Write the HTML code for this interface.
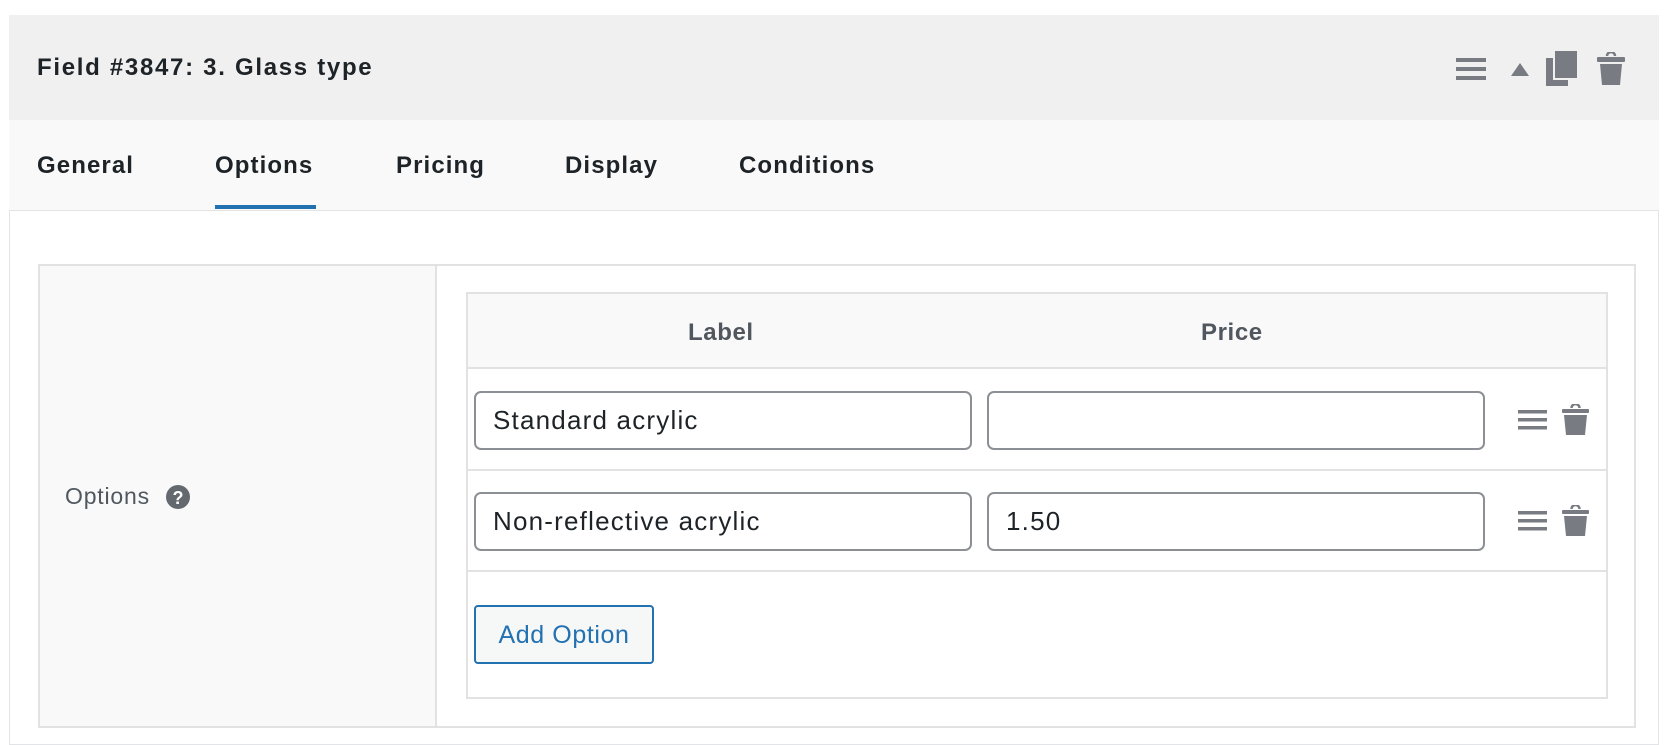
<!DOCTYPE html>
<html><head><meta charset="utf-8"><style>
*{box-sizing:border-box;margin:0;padding:0}
body{width:1674px;height:734px;background:#fff;font-family:"Liberation Sans",sans-serif;position:relative;overflow:hidden;color:#1d2327}
.abs{position:absolute}
.panel{left:9px;top:15px;width:1650px;height:730px;border:1px solid #e2e4e7;background:#fff}
.hdr{left:9px;top:15px;width:1650px;height:105px;background:#f0f0f1}
.tabs{left:9px;top:120px;width:1650px;height:91px;background:#f9f9f9;border-bottom:1px solid #e4e4e4}
.title{left:37px;top:54px;font-size:24px;font-weight:bold;color:#1d2327;letter-spacing:1.7px}
.tab{top:152px;font-size:24px;font-weight:bold;color:#1d2327;letter-spacing:1.1px}
.ul{left:215px;top:205px;width:101px;height:4px;background:#2271b1}
.outer{left:38px;top:264px;width:1598px;height:464px;border:2px solid #e2e2e2;background:#fff}
.leftcol{left:40px;top:266px;width:397px;height:460px;background:#f9f9f9;border-right:2px solid #e2e2e2}
.inner{left:466px;top:292px;width:1142px;height:407px;border:2px solid #e2e2e2;background:#fff}
.ihead{left:468px;top:294px;width:1138px;height:75px;background:#f9f9f9;border-bottom:2px solid #e2e2e2}
.th{top:319px;font-size:24px;font-weight:bold;color:#50575e;letter-spacing:0.6px}
.line{left:468px;width:1138px;height:2px;background:#e2e2e2}
.inp{height:59px;border:2px solid #8c8f94;border-radius:7px;background:#fff;font-size:26px;padding-left:17px;line-height:55px;color:#1d2327;letter-spacing:1.2px}
.btn{left:474px;top:605px;width:180px;height:59px;border:2px solid #2271b1;border-radius:4px;background:#f6f7f7;color:#2271b1;font-size:25px;line-height:57px;text-align:center;letter-spacing:0.6px}
</style></head><body>
<div class="abs panel"></div>
<div class="abs hdr"></div>
<div class="abs title">Field #3847: 3. Glass type</div>
<svg class="abs" style="left:1456px;top:58px" width="30" height="22"><rect y="0" width="30" height="4" fill="#787c82"/><rect y="9" width="30" height="4" fill="#787c82"/><rect y="18" width="30" height="4" fill="#787c82"/></svg>
<svg class="abs" style="left:1511px;top:63px" width="18" height="13"><polygon points="9,0 18,13 0,13" fill="#787c82"/></svg>
<svg class="abs" style="left:1546px;top:50px" width="32" height="36"><rect x="0" y="8" width="22" height="28" fill="#787c82"/><rect x="8" y="0" width="24" height="29" fill="#787c82" stroke="#f0f0f1" stroke-width="2"/></svg>
<svg class="abs" style="left:1597px;top:52px" width="28" height="34"><path d="M10 4 a4 4 0 0 1 8 0" stroke="#787c82" stroke-width="2.5" fill="none"/><rect x="0" y="5" width="28" height="5" rx="1" fill="#787c82"/><path d="M3 12 H25 L23 33 H5 Z" fill="#787c82"/></svg>
<div class="abs tabs"></div>
<div class="abs tab" style="left:37px">General</div>
<div class="abs tab" style="left:215px">Options</div>
<div class="abs tab" style="left:396px">Pricing</div>
<div class="abs tab" style="left:565px">Display</div>
<div class="abs tab" style="left:739px">Conditions</div>
<div class="abs ul"></div>
<div class="abs outer"></div>
<div class="abs leftcol"></div>
<div class="abs" style="left:65px;top:483px;font-size:23px;color:#50575e;letter-spacing:0.8px">Options</div>
<svg class="abs" style="left:166px;top:485px" width="24" height="24"><circle cx="12" cy="12" r="12" fill="#646970"/><text x="12" y="19" text-anchor="middle" font-family="Liberation Sans" font-weight="bold" font-size="18" fill="#fff">?</text></svg>
<div class="abs inner"></div>
<div class="abs ihead"></div>
<div class="abs th" style="left:688px">Label</div>
<div class="abs th" style="left:1201px">Price</div>
<div class="abs line" style="top:469px"></div>
<div class="abs line" style="top:570px"></div>
<div class="abs inp" style="left:474px;top:391px;width:498px">Standard acrylic</div>
<div class="abs inp" style="left:987px;top:391px;width:498px"></div>
<div class="abs inp" style="left:474px;top:492px;width:498px">Non-reflective acrylic</div>
<div class="abs inp" style="left:987px;top:492px;width:498px">1.50</div>
<svg class="abs" style="left:1518px;top:410px" width="29" height="20"><rect y="0" width="29" height="3.5" fill="#787c82"/><rect y="8" width="29" height="3.5" fill="#787c82"/><rect y="16" width="29" height="3.5" fill="#787c82"/></svg>
<svg class="abs" style="left:1562px;top:404px" width="27" height="32"><path d="M9.5 4 a4 4 0 0 1 8 0" stroke="#787c82" stroke-width="2.5" fill="none"/><rect x="0" y="5" width="27" height="4" rx="1" fill="#787c82"/><path d="M2 11 H25 L23 31 H4 Z" fill="#787c82"/></svg>
<svg class="abs" style="left:1518px;top:511px" width="29" height="20"><rect y="0" width="29" height="3.5" fill="#787c82"/><rect y="8" width="29" height="3.5" fill="#787c82"/><rect y="16" width="29" height="3.5" fill="#787c82"/></svg>
<svg class="abs" style="left:1562px;top:505px" width="27" height="32"><path d="M9.5 4 a4 4 0 0 1 8 0" stroke="#787c82" stroke-width="2.5" fill="none"/><rect x="0" y="5" width="27" height="4" rx="1" fill="#787c82"/><path d="M2 11 H25 L23 31 H4 Z" fill="#787c82"/></svg>
<div class="abs btn">Add Option</div>
</body></html>
